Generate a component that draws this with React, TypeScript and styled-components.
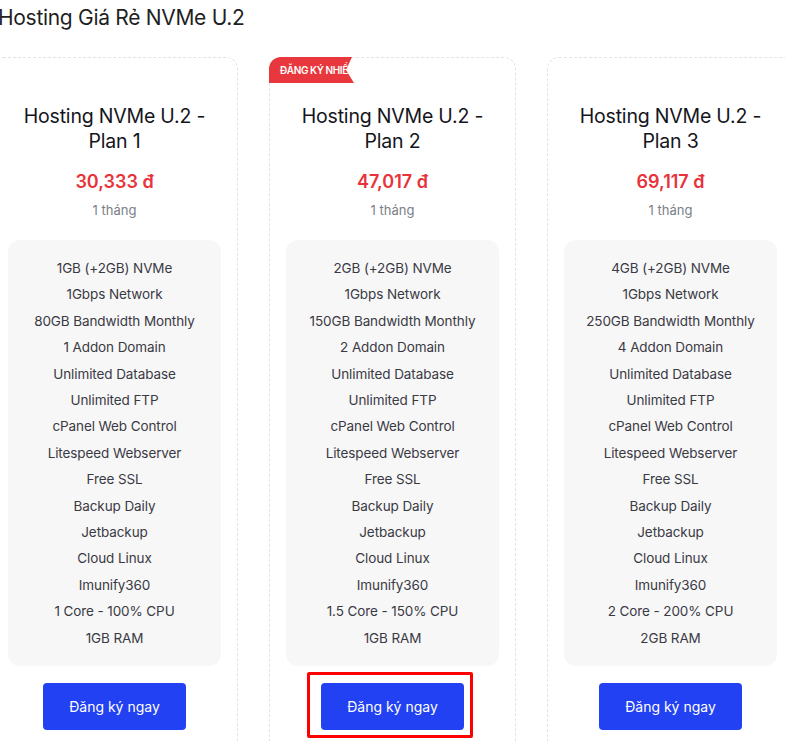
import styled, { createGlobalStyle } from 'styled-components'

const GlobalStyle = createGlobalStyle`
html, body {
margin: 0;
padding: 0;
overflow: hidden;
background: #fff;
}
body {
font-family: Inter, "Noto Sans", sans-serif;
color: #222;
}
`

type Plan = {
    name: string
    price: string
    features: string[]
    badge?: string
    highlight?: boolean
}

const shared = ['Unlimited Database', 'Unlimited FTP', 'cPanel Web Control', 'Litespeed Webserver', 'Free SSL', 'Backup Daily', 'Jetbackup', 'Cloud Linux', 'Imunify360']

const plans: Plan[] = [
    {
        name: 'Hosting NVMe U.2 - Plan 1',
        price: '30,333 đ',
        features: ['1GB (+2GB) NVMe', '1Gbps Network', '80GB Bandwidth Monthly', '1 Addon Domain', ...shared, '1 Core - 100% CPU', '1GB RAM'],
    },
    {
        name: 'Hosting NVMe U.2 - Plan 2',
        price: '47,017 đ',
        badge: 'ĐĂNG KÝ NHIỀU',
        highlight: true,
        features: ['2GB (+2GB) NVMe', '1Gbps Network', '150GB Bandwidth Monthly', '2 Addon Domain', ...shared, '1.5 Core - 150% CPU', '1GB RAM'],
    },
    {
        name: 'Hosting NVMe U.2 - Plan 3',
        price: '69,117 đ',
        features: ['4GB (+2GB) NVMe', '1Gbps Network', '250GB Bandwidth Monthly', '4 Addon Domain', ...shared, '2 Core - 200% CPU', '2GB RAM'],
    },
]

const App = () => {
    return (
        <>
            <GlobalStyle />
            <Page>
                <Heading>Hosting Giá Rẻ NVMe U.2</Heading>
                <Grid>
                    {plans.map((plan) => {
                        const parts = plan.name.split(' - ')
                        return (
                            <Card key={plan.name}>
                                {plan.badge && <Badge>{plan.badge}</Badge>}
                                <Title>
                                    {parts[0]} -<br />
                                    {parts[1]}
                                </Title>
                                <Price>{plan.price}</Price>
                                <Period>1 tháng</Period>
                                <Features>
                                    {plan.features.map((f) => (
                                        <Feature key={f}>{f}</Feature>
                                    ))}
                                </Features>
                                <ButtonRow>
                                    <ButtonWrap>
                                        <Button>Đăng ký ngay</Button>
                                        {plan.highlight && <Marker />}
                                    </ButtonWrap>
                                </ButtonRow>
                            </Card>
                        )
                    })}
                </Grid>
            </Page>
        </>
    )
}

export default App

const Page = styled.div`
width: 810px;
margin-left: -9px;
`

const Heading = styled.h2`
margin: 0;
padding: 4px 0 0 7px;
height: 53px;
font-size: 21px;
font-weight: 400;
line-height: 28px;
color: #1f1f24;
letter-spacing: -0.3px;
`

const Grid = styled.div`
display: grid;
grid-template-columns: repeat(3, 247px);
column-gap: 31px;
`

const Card = styled.div`
position: relative;
min-height: 720px;
box-sizing: border-box;
border: 1px dashed #e3e3e3;
border-radius: 12px;
padding: 46px 16px 0;
text-align: center;
`

const Badge = styled.div`
position: absolute;
top: -1px;
left: -1px;
width: 86px;
height: 26px;
box-sizing: border-box;
padding-left: 11px;
background: #e8383d;
border-top-left-radius: 12px;
clip-path: polygon(0 0, 83px 0, 77px 50%, 85px 100%, 0 100%);
color: #fff;
font-size: 10px;
font-weight: 600;
line-height: 26px;
white-space: nowrap;
overflow: hidden;
text-align: left;
letter-spacing: -0.4px;
`

const Title = styled.h3`
margin: 0;
font-size: 19.5px;
font-weight: 400;
line-height: 25px;
color: #15151c;
letter-spacing: -0.2px;
`

const Price = styled.div`
margin-top: 16px;
font-size: 18px;
font-weight: 600;
line-height: 24px;
color: #e8333a;
`

const Period = styled.div`
margin-top: 6px;
font-size: 13px;
line-height: 20px;
color: #7a7f88;
`

const Features = styled.ul`
list-style: none;
margin: 20px 0 0;
padding: 15px 0;
background: #f7f7f7;
border-radius: 12px;
`

const Feature = styled.li`
font-size: 13.5px;
line-height: 26.4px;
color: #3a3a44;
letter-spacing: -0.1px;
`

const ButtonRow = styled.div`
display: flex;
justify-content: center;
margin-top: 17px;
`

const ButtonWrap = styled.div`
position: relative;
`

const Button = styled.button`
width: 143px;
height: 47px;
border: none;
border-radius: 4px;
background: #2241f2;
color: #fff;
font-family: inherit;
font-size: 14px;
font-weight: 400;
cursor: pointer;
`

const Marker = styled.span`
position: absolute;
left: -14px;
top: -11px;
width: 166px;
height: 66px;
box-sizing: border-box;
border: 3px solid #f00;
border-radius: 2px;
pointer-events: none;
`
